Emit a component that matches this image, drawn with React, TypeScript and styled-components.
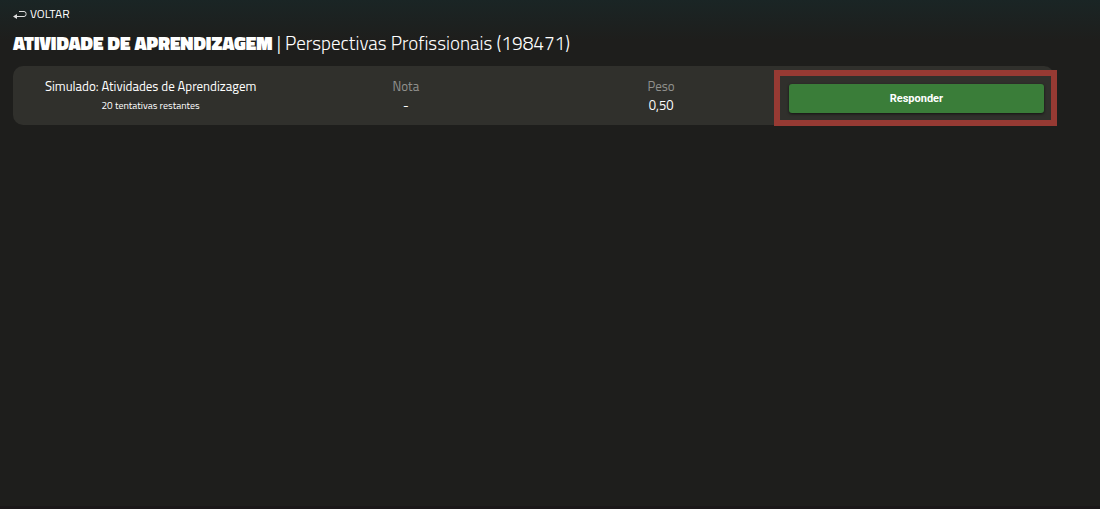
import React from "react";
import styled, { createGlobalStyle } from "styled-components";

const GlobalStyle = createGlobalStyle`
  * { box-sizing: border-box; }
  body {
    margin: 0;
    background: #1e1e1c;
    color: #fff;
    font-family: "Titillium Web", Roboto, sans-serif;
  }
`;

const Page = styled.div`
  min-height: 100vh;
  padding: 4px 46px 0 13px;
  background: linear-gradient(#1a2525, #1e1e1c 40px);
  border-bottom: 3px solid #1b1819;
`;

const BackLink = styled.a`
  display: flex;
  width: fit-content;
  align-items: center;
  gap: 3px;
  color: #fff;
  font-size: 12px;
  line-height: 20px;
  text-decoration: none;
`;

const Title = styled.h1`
  margin: 3px 0 8px;
  font-size: 19px;
  font-weight: 300;
  line-height: 31px;

  strong { font-weight: 900; }
`;

const Card = styled.section`
  display: grid;
  grid-template-columns: repeat(4, 1fr);
  padding: 10px;
  border-radius: 10px;
  background: #30302c;
`;

const Cell = styled.div`
  display: flex;
  flex-direction: column;
  align-items: center;
  font-size: 13px;
  line-height: 20px;
`;

const Label = styled.span<{ $muted?: boolean }>`
  color: ${(p) => (p.$muted ? "#91918e" : "#fff")};
`;

const Value = styled.span<{ $small?: boolean }>`
  font-size: ${(p) => (p.$small ? 10 : 13)}px;
  line-height: 19px;
`;

const Action = styled.div`
  position: relative;
  align-self: start;
  display: flex;
  padding-top: 8px;
`;

const Highlight = styled.div`
  position: absolute;
  inset: -6px -13px -13px -15px;
  border: 6px solid #963a33;
  pointer-events: none;
`;

const Button = styled.button`
  flex: 1;
  height: 29px;
  border: 0;
  border-radius: 3px;
  background: #3a7d39;
  box-shadow: 0 1px 3px rgba(0, 0, 0, 0.6);
  color: #fff;
  font: 700 11px/16px Roboto, sans-serif;
  cursor: pointer;
`;

export default function App() {
  return (
    <>
      <GlobalStyle />
      <Page>
        <BackLink href="#">
          <svg width="14" height="10" viewBox="0 0 14 10" fill="none" stroke="#ddd" aria-hidden="true">
            <path d="M2 7.5H11Q13 7.5 13 5.5V4.5Q13 2.5 11 2.5H6" />
            <path d="M0 7.5L4 5V10Z" fill="#ddd" stroke="none" />
          </svg>
          VOLTAR
        </BackLink>
        <Title>
          <strong>ATIVIDADE DE APRENDIZAGEM</strong> | Perspectivas Profissionais (198471)
        </Title>
        <Card>
          <Cell>
            <Label>Simulado: Atividades de Aprendizagem</Label>
            <Value $small>20 tentativas restantes</Value>
          </Cell>
          <Cell>
            <Label $muted>Nota</Label>
            <Value>-</Value>
          </Cell>
          <Cell>
            <Label $muted>Peso</Label>
            <Value>0,50</Value>
          </Cell>
          <Action>
            <Button type="button">Responder</Button>
            <Highlight />
          </Action>
        </Card>
      </Page>
    </>
  );
}
